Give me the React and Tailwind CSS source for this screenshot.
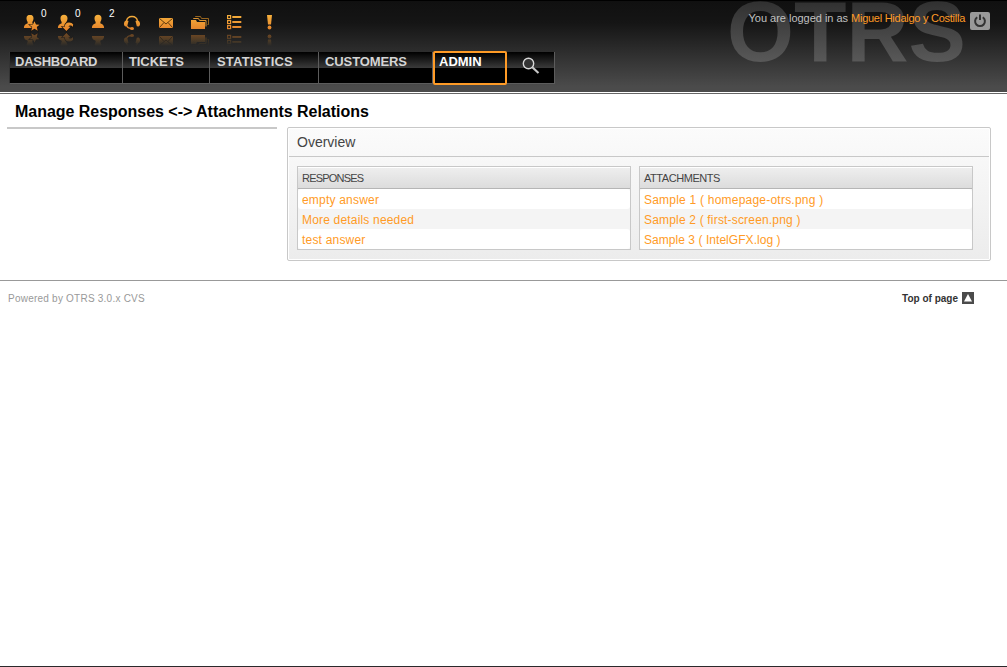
import React from 'react';

const Person = () => (
  <path d="M16 14.800c-2.200 0-3.500 1.500-3.500 3.500 0 1.500.5 2.700 1.200 3.800l-.2 1.300c-2.200.5-3.600 1.800-3.600 4.600h12.200c0-2.800-1.400-4.100-3.600-4.600l-.2-1.300c.7-1.100 1.200-2.300 1.200-3.800 0-2-1.300-3.500-3.500-3.500z" />
);

const icons = [
  {
    count: '0',
    art: (
      <>
        <Person />
        <path d="M20.500 21.300l1.500 3.200 3.500.3-2.700 2.300.9 3.600-3.200-1.900-3.200 1.900.9-3.600-2.700-2.300 3.500-.3z" stroke="#171310" strokeWidth="1.200" paintOrder="stroke" />
      </>
    ),
  },
  {
    count: '0',
    art: (
      <>
        <Person />
        <path d="M14.200 26.800h2.600c0-2.600 1.600-4.400 4.200-4.400 1.900 0 3.400.7 4.200 2.100l-.5 2.400c-.8-1.300-1.900-1.700-3-1.400-.8.2-1.100.7-1.100 1.300h1.900l-4.100 4.300z" stroke="#171310" strokeWidth="1.200" paintOrder="stroke" />
      </>
    ),
  },
  { count: '2', art: <Person /> },
  {
    art: (
      <>
        <path d="M10.300 21.500c.6-3.200 2.800-5 5.700-5s5.100 1.800 5.700 5" fill="none" stroke="url(#amber)" strokeWidth="1.300" />
        <path d="M10.500 20.300l2 .8-1.300 5.200-1.700.2c-1.200-.6-1.700-1.800-1.500-3.200.2-1.500 1.200-2.700 2.500-3zM21.500 20.300l-2 .8 1.300 5.200 1.700.2c1.200-.6 1.700-1.800 1.500-3.200-.2-1.500-1.200-2.700-2.500-3z" />
        <path d="M10.800 26c.6 1.500 2 2.400 4.200 2.400" fill="none" stroke="url(#amber)" strokeWidth="1.200" />
        <ellipse cx="16" cy="28.400" rx="2" ry="1.500" />
      </>
    ),
  },
  {
    art: (
      <>
        <rect x="9" y="18" width="14" height="10" rx="0.800" />
        <path d="M9.500 18.500l6.500 5.500 6.500-5.500M9.500 27.500l4.500-5M22.500 27.500l-4.500-5" fill="none" stroke="#50300b" strokeWidth="0.900" />
      </>
    ),
  },
  {
    art: (
      <>
        <path d="M11.500 17v-.5h5l1 2h7v6h-1" fill="none" stroke="#b87920" strokeOpacity="0.800" />
        <path d="M9.500 19v-.5h5l1 2h6.500v6" fill="none" stroke="#dc9430" />
        <path d="M7 20h5l1 2h8v7h-14z" />
      </>
    ),
  },
  {
    art: (
      <>
        {[15, 20, 25].map((y) => (
          <React.Fragment key={y}>
            <rect x="9.600" y={y + 0.6} width="3" height="3" fill="none" stroke="url(#amber)" strokeWidth="1.200" />
            <rect x="14.300" y={y + 1} width="9" height="2" />
          </React.Fragment>
        ))}
      </>
    ),
  },
  {
    art: (
      <>
        <path d="M15 15h5l-1 9.500h-3z" />
        <circle cx="17.500" cy="27.500" r="1.900" />
      </>
    ),
  },
];

const Toolbar = () => (
  <ul className="flex h-12 pl-3.5">
    {icons.map((icon, i) => (
      <li key={i} className="relative h-12 w-[34px]">
        <svg width="34" height="48" viewBox="0 0 34 48" className="block overflow-visible">
          <defs>
            <linearGradient id="amber" gradientUnits="userSpaceOnUse" x1="0" y1="15" x2="0" y2="29">
              <stop offset="0" stopColor="#f6b03c" />
              <stop offset="1" stopColor="#e5852c" />
            </linearGradient>
            <linearGradient id="fade" gradientUnits="userSpaceOnUse" x1="0" y1="33" x2="0" y2="46">
              <stop offset="0" stopColor="#fff" stopOpacity="0.450" />
              <stop offset="1" stopColor="#fff" stopOpacity="0" />
            </linearGradient>
            <mask id="mirror" maskUnits="userSpaceOnUse" x="0" y="32" width="34" height="16">
              <rect x="0" y="32" width="34" height="16" fill="url(#fade)" />
            </mask>
          </defs>
          <g fill="url(#amber)">{icon.art}</g>
          <g mask="url(#mirror)">
            <g fill="url(#amber)" transform="matrix(1 0 0 -1 0 64)">{icon.art}</g>
          </g>
        </svg>
        {icon.count && (
          <span className="absolute left-[27px] top-[7px] text-[10px] leading-[13px] text-white">{icon.count}</span>
        )}
      </li>
    ))}
  </ul>
);

const navItem = 'h-8 border-b border-r border-[#5c5c5c] pt-px text-[13px] leading-[17px] font-bold text-[#d5d5d5] bg-[linear-gradient(#000_0,#3a3a3a_16px,#000_16px)]';

const Nav = () => (
  <nav className="flex h-[34px] items-center pl-[9px]">
    <a className={`${navItem} w-[114px] border-l border-l-[#333] pl-[5px] tracking-[-0.250px]`}>DASHBOARD</a>
    <a className={`${navItem} w-[87px] pl-1.5 tracking-[-0.100px]`}>TICKETS</a>
    <a className={`${navItem} w-[109px] pl-[7px] tracking-[0.200px]`}>STATISTICS</a>
    <a className={`${navItem} w-[114px] pl-1.5 tracking-[-0.100px]`}>CUSTOMERS</a>
    <a className="h-[34px] w-[74px] rounded-[2px] border-2 border-[#ff9b26] bg-[linear-gradient(#000_0,#3a3a3a_15px,#000_15px)] pl-1 text-[13px] leading-[17px] font-bold text-white">ADMIN</a>
    <a className={`${navItem} w-12 pl-[5px]`}>
      <svg width="20" height="20" viewBox="0 0 20 20" className="ml-[9px] mt-[3px]" fill="none">
        <circle cx="7.500" cy="7.500" r="5.200" stroke="#d8d8d8" strokeWidth="1.400" fill="#333" />
        <path d="M11.300 11.300l6.200 5.700" stroke="#c8c8c8" strokeWidth="2.200" />
      </svg>
    </a>
  </nav>
);

const Table = ({ title, titleTracking, rows }) => (
  <section className="h-[84px] w-[334px] border border-[#c8c8c8] bg-[#f4f4f4]">
    <h3 className={`h-[22px] border-b border-[#b5b5b5] bg-linear-to-b from-[#efefef] to-[#dcdcdc] pl-1 text-[11px] leading-[22px] text-[#444] shadow-[inset_0_1px_#fff] ${titleTracking}`}>{title}</h3>
    {rows.map(([text, tracking], i) => (
      <div key={text} className={`h-5 rounded-[3px] pl-1 text-[12px] leading-[22px] text-[#ff9b26] ${i % 2 ? 'bg-[#f4f4f4]' : 'bg-white'}`}>
        <a className={tracking}>{text}</a>
      </div>
    ))}
  </section>
);

const responses = [
  ['empty answer', 'tracking-[0.200px]'],
  ['More details needed', 'tracking-[0.180px]'],
  ['test answer', 'tracking-[0.200px]'],
];

const attachments = [
  ['Sample 1 ( homepage-otrs.png )', 'tracking-[0.220px]'],
  ['Sample 2 ( first-screen.png )', 'tracking-[0.180px]'],
  ['Sample 3 ( IntelGFX.log )', 'tracking-[0.050px]'],
];

export default function App() {
  return (
    <div className="flex h-[667px] w-[1007px] flex-col border-b border-[#2b292b] bg-white font-['Liberation_Sans',Arial,sans-serif]">
      <header className="relative h-[92px] shrink-0 overflow-hidden border-t border-black bg-[linear-gradient(#101010_0,#151515_22px,#4b4b4b_86px)]">
        <div className="absolute left-[727px] top-[-20px] bg-[linear-gradient(#303030_20%,#585858_80%)] bg-clip-text text-[86px] leading-[100px] font-bold text-transparent">OTRS</div>
        <div className="-mt-px flex h-[51px]">
          <Toolbar />
          <div className="relative ml-auto flex h-6 items-start pr-[17px] pt-3 text-[11px] leading-[13px] tracking-[-0.130px]">
            <span className="mr-[3px] tracking-[-0.020px] text-[#c0c0c0]">You are logged in as</span>
            <a className="tracking-[-0.260px] text-[#ff9b26]">Miguel Hidalgo y Costilla</a>
            <a className="ml-[5px] flex h-[18px] w-5 items-center justify-center rounded-[2px] bg-[#999]">
              <svg width="14" height="14" viewBox="0 0 14 14" fill="none" stroke="#333" strokeWidth="2">
                <path d="M4.200 3.200a4.900 4.900 0 1 0 5.600 0M7 .5v5.500" />
              </svg>
            </a>
          </div>
        </div>
        <Nav />
      </header>
      <div className="mt-px h-px shrink-0 bg-[#666]" />
      <h1 className="mt-2 h-[25px] pl-[15px] text-[16px] leading-[19px] font-bold tracking-[-0.030px] text-black">Manage Responses &lt;-&gt; Attachments Relations</h1>
      <main className="flex h-[134px] gap-2.5 pl-[7px]">
        <aside className="w-[270px] border-t-2 border-[#c8c8c8]" />
        <section className="w-[704px] rounded-[2px] border border-[#c8c8c8] bg-linear-to-b from-[#fbfbfb] to-[#ececec] shadow-[inset_0_0_0_1px_#fff]">
          <h2 className="mx-px h-[29px] border-b border-[#c8c8c8] pl-2 text-[14px] leading-[29px] text-[#444]">Overview</h2>
          <div className="flex gap-2 pl-[9px] pt-[9px]">
            <Table title="RESPONSES" titleTracking="tracking-[-0.800px]" rows={responses} />
            <Table title="ATTACHMENTS" titleTracking="tracking-[-0.450px]" rows={attachments} />
          </div>
        </section>
      </main>
      <footer className="mt-[19px] flex h-10 items-start justify-between border-t border-[#999] pl-2 pr-[33px] pt-[11px] text-[10px] leading-[13px]">
        <span className="tracking-[0.230px] text-[#999]">Powered by OTRS 3.0.x CVS</span>
        <a className="flex gap-1 font-bold text-[#333]">
          Top of page
          <svg width="12" height="12" viewBox="0 0 12 12">
            <rect width="12" height="12" fill="#4b4b4b" />
            <path d="M6 2l4 7.500H2z" fill="#fff" />
          </svg>
        </a>
      </footer>
    </div>
  );
}
